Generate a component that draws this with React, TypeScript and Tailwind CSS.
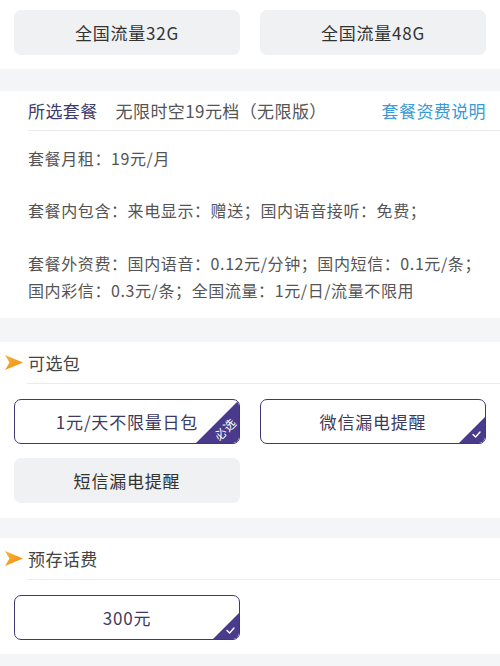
import React from 'react';

const font = { fontFamily: '"Noto Sans CJK SC", "Noto Sans", sans-serif' };

function Corner({ size, label }: { size: number; label?: string }) {
  return (
    <div
      className="absolute right-0 bottom-0 bg-[#4a3a8c] [clip-path:polygon(100%_0,100%_100%,0_100%)] rounded-br-[5px]"
      style={{ width: size, height: size }}
    >
      {label ? (
        <span className="absolute left-[29px] top-[29px] -translate-x-1/2 -translate-y-1/2 -rotate-45 text-[12px] leading-none text-white whitespace-nowrap">
          {label}
        </span>
      ) : (
        <svg className="absolute right-[4px] bottom-[5px]" width="9" height="7" viewBox="0 0 9 7">
          <path d="M1 3.5 L3.6 6 L8 1" fill="none" stroke="#fff" strokeWidth="1.4" strokeLinecap="round" strokeLinejoin="round" />
        </svg>
      )}
    </div>
  );
}

function Chip({ text, selected, corner, label }: { text: string; selected?: boolean; corner?: number; label?: string }) {
  return (
    <div
      className={
        'relative h-[45px] rounded-[7px] flex items-center justify-center text-[17px] tracking-[0.8px] overflow-hidden ' +
        (selected ? 'border border-[#3f3875] bg-white text-[#3d3a5e]' : 'bg-[#eff1f2] text-[#333]')
      }
    >
      {text}
      {selected && corner ? <Corner size={corner} label={label} /> : null}
    </div>
  );
}

function Arrow() {
  return (
    <svg width="18" height="15" viewBox="0 0 18 15" className="shrink-0">
      <defs>
        <linearGradient id="ag" x1="0" y1="0" x2="1" y2="1">
          <stop offset="0" stopColor="#f9b437" />
          <stop offset="1" stopColor="#f08a0c" />
        </linearGradient>
      </defs>
      <polygon points="0,0 18,7.5 0,15 4.5,7.5" fill="url(#ag)" />
    </svg>
  );
}

function SectionHead({ title }: { title: string }) {
  return (
    <div className="flex items-center h-[41px] pl-[5px] gap-[5px]">
      <Arrow />
      <span className="text-[17px] tracking-[0.4px] text-[#444]">{title}</span>
    </div>
  );
}

export default function App() {
  return (
    <div className="w-[500px] h-[666px] bg-white overflow-hidden" style={font}>
      <div className="grid grid-cols-2 gap-[20px] px-[14px] pt-[10px] pb-[14px]">
        <Chip text="全国流量32G" />
        <Chip text="全国流量48G" />
      </div>
      <div className="h-[22px] bg-[#f4f5f7]" />

      <div className="pl-[28px]">
        <div className="flex items-center h-[40px] pr-[14px] border-b border-[#ececec] text-[17px] tracking-[0.4px]">
          <span className="text-[#3d3a6e]">所选套餐</span>
          <span className="ml-[18px] text-[#555]">无限时空19元档（无限版）</span>
          <span className="ml-auto text-[#3a9ad6]">套餐资费说明</span>
        </div>
        <div className="text-[16px] tracking-[0.6px] text-[#555] leading-[27px] whitespace-nowrap">
          <p className="pt-[14px]">套餐月租：19元/月</p>
          <p className="pt-[25px]">套餐内包含：来电显示：赠送；国内语音接听：免费；</p>
          <p className="pt-[26px] pb-[14px]">
            套餐外资费：国内语音：0.12元/分钟；国内短信：0.1元/条；
            <br />
            国内彩信：0.3元/条；全国流量：1元/日/流量不限用
          </p>
        </div>
      </div>
      <div className="h-[24px] bg-[#f4f5f7]" />

      <SectionHead title="可选包" />
      <div className="ml-[27px] border-b border-[#ececec]" />
      <div className="grid grid-cols-2 gap-x-[20px] gap-y-[14px] px-[14px] pt-[15px] pb-[15px]">
        <Chip text="1元/天不限量日包" selected corner={43} label="必选" />
        <Chip text="微信漏电提醒" selected corner={26} />
        <Chip text="短信漏电提醒" />
      </div>
      <div className="h-[20px] bg-[#f4f5f7]" />

      <SectionHead title="预存话费" />
      <div className="ml-[27px] border-b border-[#ececec]" />
      <div className="grid grid-cols-2 gap-x-[20px] px-[14px] pt-[15px] pb-[14px]">
        <Chip text="300元" selected corner={26} />
      </div>
      <div className="h-[20px] bg-[#f4f5f7]" />
    </div>
  );
}
